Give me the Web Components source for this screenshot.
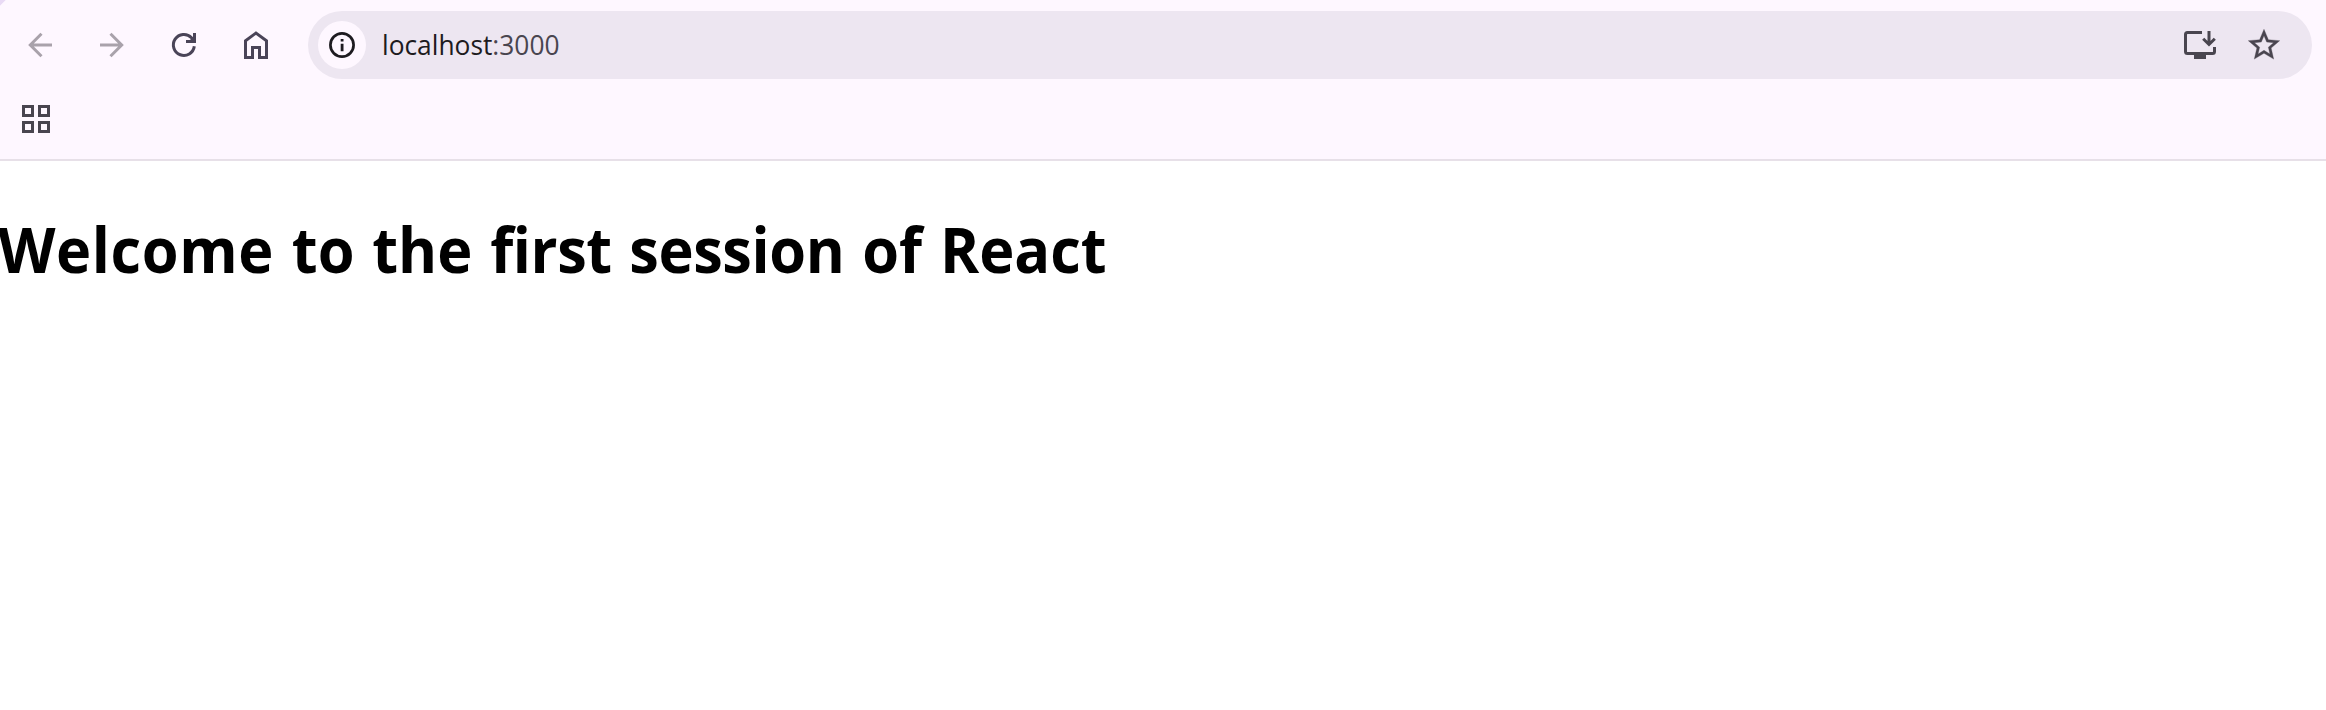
<!DOCTYPE html>
<html lang="en">
<head>
<meta charset="utf-8">
<title>localhost:3000</title>
<style>
html,body{margin:0;height:100%;background:#fff;overflow:hidden}
body{font-family:"Open Sans","Noto Sans",sans-serif}
.loose{letter-spacing:.650px}
.tight{letter-spacing:-.400px}
</style>
</head>
<body>
<browser-window>
  <nav-toolbar slot="chrome"><address-bar>localhost<span slot="port">:3000</span></address-bar></nav-toolbar>
  <bookmarks-bar slot="chrome"></bookmarks-bar>
  <welcome-page><span class="loose">Welcome</span> to the <span class="tight">first session</span> of React</welcome-page>
</browser-window>
<script>
function define(name, html) {
  customElements.define(name, class extends HTMLElement {
    constructor() {
      super();
      this.attachShadow({ mode: 'open' }).innerHTML = html;
    }
  });
}

define('browser-window', `
<style>
:host{display:flex;flex-direction:column;width:100%;height:100vh;background:#fff}
header{height:159px;border-bottom:2px solid #e7e0e8;background:linear-gradient(135deg,#e9daf5 3.5px,transparent 4.5px) 0 0/8px 8px no-repeat,#fef7ff;flex:none}
main{flex:1;min-height:0}
</style>
<header><slot name="chrome"></slot></header>
<main><slot></slot></main>`);

define('nav-toolbar', `
<style>
:host{display:flex;align-items:center;height:90px;box-sizing:border-box;padding:0 14px 0 22px}
svg{display:block;width:36px;height:36px;flex:none;margin-right:36px}
svg:nth-of-type(4){margin-right:34px}
slot{display:block;flex:1}
</style>
<svg viewBox="0 0 36 36" fill="none" stroke="#a9a2ab" stroke-width="3"><path d="M30 18H8M19.5 6.8 8.3 18l11.2 11.2"/></svg>
<svg viewBox="0 0 36 36" fill="none" stroke="#a9a2ab" stroke-width="3"><path d="M6 18h22M16.5 6.8 27.7 18 16.500 29.200"/></svg>
<svg viewBox="0 0 36 36" fill="none" stroke="#4a4458" stroke-width="3"><path d="M28.300 19.300A10.500 10.500 0 1 1 25.500 10.700L28 13.500"/><path d="M20 14.500h8.500V6"/><path d="M28 9v5h-5z" fill="#4a4458" stroke="none"/></svg>
<svg viewBox="0 0 36 36" fill="none" stroke="#4a4458" stroke-width="3"><path d="M7.500 30.500V13.800L18 6l10.500 7.800v16.700h-7V20.500h-7v10z"/></svg>
<slot></slot>`);

define('address-bar', `
<style>
:host{display:flex;align-items:center;box-sizing:border-box;height:68px;padding:0 30px 0 10px;border-radius:34px;background:#ede6f1;color:#1d1b20;font-size:27.500px;line-height:38px}
.info{display:flex;align-items:center;justify-content:center;width:48px;height:48px;border-radius:50%;background:#fef7ff;margin-right:15.500px}
.url{flex:1;white-space:nowrap;transform:scaleX(.958);transform-origin:left;padding-bottom:1px;margin-right:-20px}
.port{color:#49454f}
svg{display:block;width:36px;height:36px;flex:none}
.install{margin-left:20px;margin-right:28px}
</style>
<span class="info"><svg viewBox="0 0 36 36"><circle cx="18" cy="18" r="11.600" fill="none" stroke="#1d1b20" stroke-width="2.700"/><path d="M16.700 16.700h2.800v7.500h-2.800zM16.700 12h2.800v2.600h-2.800z" fill="#1d1b20"/></svg></span>
<span class="url"><slot></slot><span class="port"><slot name="port"></slot></span></span>
<svg class="install" viewBox="0 0 36 36" fill="none" stroke="#49454f" stroke-width="3"><path d="M20 5.500H5.500a2 2 0 0 0-2 2v17a2 2 0 0 0 2 2h25a2 2 0 0 0 2-2V20M27 4v13.500M21.200 11.700 27 17.500l5.800-5.800"/><path d="M12 27h12v5H12z" fill="#49454f" stroke="none"/></svg>
<svg viewBox=".54 .54 22.930 22.930" fill="#49454f" stroke="#49454f" stroke-width=".2"><path d="M22 9.240l-7.190-.620L12 2 9.190 8.630 2 9.240l5.460 4.730L5.820 21 12 17.270 18.180 21l-1.630-7.030zM12 15.400l-3.760 2.270 1-4.280-3.320-2.880 4.380-.380L12 6.100l1.710 4.040 4.380.380-3.320 2.880 1 4.280z"/></svg>`);

define('bookmarks-bar', `
<style>
:host{display:flex;align-items:flex-start;height:69px;box-sizing:border-box;padding:15px 22px}
.grid{display:grid;grid-template-columns:12px 12px;grid-auto-rows:12px;gap:4px}
i{box-sizing:border-box;border:3px solid #49454f}
</style>
<div class="grid"><i></i><i></i><i></i><i></i></div>`);

define('welcome-page', `
<style>
:host{display:block;color:#000}
h1{margin:0 0 0 -2px;padding-top:45px;font-size:63px;line-height:86px;font-weight:700;white-space:nowrap;font-variant-ligatures:none;word-spacing:2.500px;transform:scaleX(.944);transform-origin:left}
</style>
<h1><slot></slot></h1>`);
</script>
</body>
</html>
